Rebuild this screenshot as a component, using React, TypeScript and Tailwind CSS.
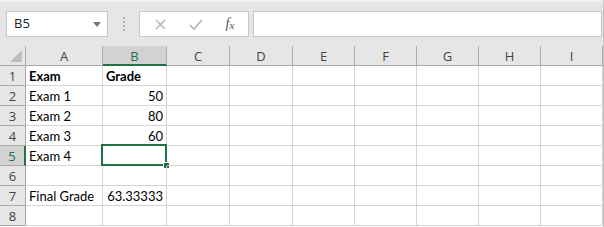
const cols = ["A", "B", "C", "D", "E", "F", "G", "H", "I"];

type Cell = { text: string; bold?: boolean; right?: boolean };

const rows: Record<number, Record<string, Cell>> = {
  1: { A: { text: "Exam", bold: true }, B: { text: "Grade", bold: true } },
  2: { A: { text: "Exam 1" }, B: { text: "50", right: true } },
  3: { A: { text: "Exam 2" }, B: { text: "80", right: true } },
  4: { A: { text: "Exam 3" }, B: { text: "60", right: true } },
  5: { A: { text: "Exam 4" } },
  6: {},
  7: { A: { text: "Final Grade" }, B: { text: "63.33333", right: true } },
  8: {},
};

function Toolbar() {
  return (
    <div className="h-[46px] bg-[#e6e6e6] border-t-2 border-[#f0f0f0] flex items-start pt-[9px] pl-[6px] font-['Open_Sans',sans-serif]">
      {/* Name box */}
      <div className="w-[102px] h-[26px] bg-white border border-[#c6c6c6] flex items-center pl-[7px] pr-[6px] text-[13px] text-[#222]">
        <span className="flex-1">B5</span>
        <svg width="8" height="5" viewBox="0 0 8 5">
          <path d="M0 0 L8 0 L4 5 Z" fill="#777" />
        </svg>
      </div>
      {/* Grip dots */}
      <div className="w-[31px] h-[26px] flex flex-col items-center justify-center gap-[2px]">
        <div className="w-[2px] h-[2px] bg-[#b0b0b0]" />
        <div className="w-[2px] h-[2px] bg-[#b0b0b0]" />
        <div className="w-[2px] h-[2px] bg-[#b0b0b0]" />
        <div className="w-[2px] h-[2px] bg-[#b0b0b0]" />
      </div>
      {/* Cancel / enter / fx */}
      <div className="w-[110px] h-[26px] bg-white border border-[#c6c6c6] flex items-center">
        <div className="w-[40px] flex justify-center">
          <svg width="11" height="11" viewBox="0 0 11 11">
            <path d="M1 1 L10 10 M10 1 L1 10" stroke="#b3b3b3" strokeWidth="1.4" />
          </svg>
        </div>
        <div className="w-[32px] flex justify-center">
          <svg width="14" height="11" viewBox="0 0 14 11">
            <path d="M1 6 L5 10 L13 1" stroke="#b3b3b3" strokeWidth="1.6" fill="none" />
          </svg>
        </div>
        <div className="w-[36px] flex justify-center font-['Liberation_Serif',serif] italic text-[14px] text-[#555] leading-none">
          <span>f</span>
          <span className="text-[11px] mt-[3px]">x</span>
        </div>
      </div>
      <div className="w-[4px]" />
      {/* Formula bar */}
      <div className="flex-1 h-[26px] bg-white border border-[#c6c6c6] mr-[1px]" />
    </div>
  );
}

export default function App() {
  return (
    <div className="w-[604px] h-[227px] overflow-hidden bg-white border-r border-[#c6c6c6]">
      <Toolbar />
      <div className="grid grid-cols-[26px_77px_64px_63px_63px_62px_62px_62px_62px_62px] auto-rows-[20px] font-['Open_Sans',sans-serif]">
        {/* Header row */}
        <div className="relative bg-[#e6e6e6] border-r border-b border-[#ababab]">
          <svg className="absolute right-[3px] bottom-[3px]" width="12" height="12" viewBox="0 0 12 12">
            <path d="M12 0 L12 12 L0 12 Z" fill="#bdbdbd" />
          </svg>
        </div>
        {cols.map((c) =>
          c === "B" ? (
            <div
              key={c}
              className="bg-[#d2d2d2] border-r border-[#ababab] border-b-2 border-b-[#217346] flex items-center justify-center text-[13px] text-[#217346] pt-[3px]"
            >
              {c}
            </div>
          ) : (
            <div
              key={c}
              className="bg-[#e6e6e6] border-r border-b border-[#ababab] flex items-center justify-center text-[13px] text-[#444] pt-[2px]"
            >
              {c}
            </div>
          )
        )}

        {/* Data rows */}
        {[1, 2, 3, 4, 5, 6, 7, 8].map((r) => (
          <div key={r} className="contents">
            {r === 5 ? (
              <div className="bg-[#d2d2d2] border-r-2 border-r-[#217346] border-b border-b-[#ababab] flex items-center justify-center text-[13px] text-[#217346] pt-[2px]">
                {r}
              </div>
            ) : (
              <div className="bg-[#e6e6e6] border-r border-b border-[#ababab] flex items-center justify-center text-[13px] text-[#444] pt-[2px]">
                {r}
              </div>
            )}
            {cols.map((c) => {
              const cell = rows[r][c];
              const selected = r === 5 && c === "B";
              return (
                <div
                  key={c}
                  className={`relative border-r border-b border-[#d4d4d4] flex items-center px-[3px] pt-[3px] text-[13px] text-black font-['Lato',sans-serif] whitespace-nowrap ${
                    cell?.right ? "justify-end" : "justify-start"
                  } ${cell?.bold ? "font-bold" : ""}`}
                >
                  {cell?.text}
                  {selected && (
                    <>
                      <div className="absolute -left-[2px] -top-[2px] -right-[1px] -bottom-[1px] border-2 border-[#217346]" />
                      <div className="absolute -right-[4px] -bottom-[4px] w-[7px] h-[7px] bg-[#217346] border border-white" />
                    </>
                  )}
                </div>
              );
            })}
          </div>
        ))}
      </div>
    </div>
  );
}
